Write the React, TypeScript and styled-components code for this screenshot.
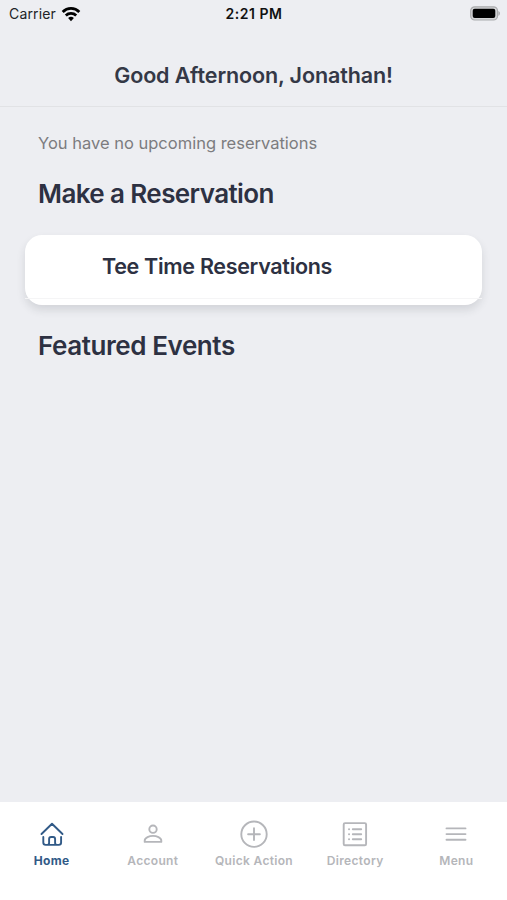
import React from "react";
import styled, { createGlobalStyle } from "styled-components";

const GlobalStyle = createGlobalStyle`
  * { box-sizing: border-box; }
  body { margin: 0; background: #edeef2; }
`;

const Screen = styled.div`
  display: flex;
  flex-direction: column;
  width: 507px;
  height: 900px;
  overflow: hidden;
  background: #edeef2;
  color: #2d3142;
  font-family: Inter, "Liberation Sans", sans-serif;
`;

const StatusBar = styled.div`
  display: grid;
  grid-template-columns: 1fr auto 1fr;
  align-items: center;
  height: 27px;
  padding: 0 7px 0 9px;
  color: #111;
  font-size: 14px;
  line-height: 27px;
`;

const Carrier = styled.div`
  display: flex;
  align-items: center;
  gap: 5px;
  color: #222327;
  letter-spacing: 0.15px;
`;

const Clock = styled.div`
  font-weight: 600;
  letter-spacing: 0.55px;
  margin-right: 1px;
`;

const Battery = styled.div`
  display: flex;
  justify-content: flex-end;
`;

const Header = styled.header`
  display: flex;
  align-items: center;
  justify-content: center;
  height: 80px;
  padding-top: 17px;
  border-bottom: 1px solid #e1e2e5;
`;

const Greeting = styled.h1`
  margin: 0;
  font-size: 21.5px;
  line-height: 28px;
  font-weight: 600;
  letter-spacing: -0.12px;
  color: #343846;
`;

const Main = styled.main`
  flex: 1;
  padding: 25px 25px 0;
`;

const Notice = styled.p`
  margin: 0 13px;
  font-size: 16.5px;
  line-height: 22px;
  color: #7c7c7f;
`;

const SectionTitle = styled.h2<{ $tracking: number }>`
  margin: 0 13px;
  font-size: 26px;
  line-height: 34px;
  font-weight: 600;
  letter-spacing: ${(p) => p.$tracking}px;
`;

const Section = styled.section`
  margin-top: 23px;

  & + & {
    margin-top: 24px;
  }
`;

const Card = styled.div`
  height: 70px;
  margin-top: 24px;
  border-radius: 17px;
  background: #fff;
  box-shadow: 0 5px 9px rgba(40, 45, 55, 0.13);
`;

const CardRow = styled.div`
  height: 64px;
  padding: 17px 77px 0;
  border-bottom: 1px solid #f5f5f6;
  font-size: 21.5px;
  line-height: 28px;
  font-weight: 600;
  letter-spacing: -0.31px;
  white-space: nowrap;
`;

const TabBar = styled.nav`
  display: grid;
  grid-template-columns: repeat(5, 1fr);
  height: 98px;
  padding: 18px 0 0 1px;
  background: #fff;
`;

const Tab = styled.div<{ $active?: boolean }>`
  display: flex;
  flex-direction: column;
  align-items: center;
  gap: 5px;
  color: ${(p) => (p.$active ? "#315a87" : "#b5b6ba")};
  font-size: 12px;
  line-height: 16px;
  font-weight: ${(p) => (p.$active ? 700 : 600)};
  letter-spacing: 0.32px;
  white-space: nowrap;
`;

const Icon = styled.svg`
  display: block;
  width: 28px;
  height: 28px;
  fill: none;
  stroke: currentColor;
  stroke-width: 1.9;
  stroke-linecap: round;
  stroke-linejoin: round;
`;

const WifiIcon = () => (
  <svg width="20" height="16" viewBox="0 0 20 16" fill="none" stroke="#000" strokeWidth="2.8">
    <path d="M1.7 5.9a11.6 11.6 0 0 1 16.6 0" />
    <path d="M4.8 9.5a7.5 7.5 0 0 1 10.4 0" />
    <path d="M10 15.2 7.1 12.1a4.1 4.1 0 0 1 5.8 0z" fill="#000" stroke="none" />
  </svg>
);

const BatteryIcon = () => (
  <svg width="30" height="15" viewBox="0 0 30 15">
    <rect x="0.7" y="0.8" width="26.8" height="13.2" rx="4" fill="#d4d5d7" stroke="#aaabad" strokeWidth="1.2" />
    <rect x="2.7" y="2.8" width="22.6" height="9.2" rx="2" fill="#000" />
    <path d="M28.4 5.1c2 .8 2 3.8 0 4.6z" fill="#a8a9ab" />
  </svg>
);

const HomeIcon = () => (
  <Icon viewBox="0 0 28 28">
    <path d="M3.5 14 14 3.8 24.5 14M5.3 17v5.6a2.3 2.3 0 0 0 2.3 2.3h13.2a2.3 2.3 0 0 0 2.3-2.3V17M8 24.9h1.1a2 2 0 0 0 2-2V19a2 2 0 0 1 2-2h2a2 2 0 0 1 2 2v3.9a2 2 0 0 0 2 2" />
  </Icon>
);

const AccountIcon = () => (
  <Icon viewBox="0 0 28 28">
    <circle cx="14" cy="9.2" r="3.7" />
    <path d="M5.7 21.9v-1.2c0-3.2 4.8-4.8 8.3-4.8s8.3 1.6 8.3 4.8v1.2z" />
  </Icon>
);

const QuickActionIcon = () => (
  <Icon viewBox="0 0 28 28">
    <circle cx="14" cy="14.2" r="12.7" />
    <path d="M14 8.3v11.8M8.1 14.2h11.8" />
  </Icon>
);

const DirectoryIcon = () => (
  <Icon viewBox="0 0 28 28">
    <rect x="2.7" y="3.1" width="22.4" height="22.2" rx="1.3" />
    <path d="M11.8 9.3h8.4M11.8 14.3h8.4M11.8 19.3h8.4M8 9.3h.1M8 14.3h.1M8 19.3h.1" />
  </Icon>
);

const MenuIcon = () => (
  <Icon viewBox="0 0 28 28">
    <path d="M4.5 8.4h19M4.5 14.1h19M4.5 19.7h19" />
  </Icon>
);

const tabs = [
  { label: "Home", Glyph: HomeIcon, active: true },
  { label: "Account", Glyph: AccountIcon },
  { label: "Quick Action", Glyph: QuickActionIcon },
  { label: "Directory", Glyph: DirectoryIcon },
  { label: "Menu", Glyph: MenuIcon },
];

export default function App() {
  return (
    <Screen>
      <GlobalStyle />
      <StatusBar>
        <Carrier>
          <span>Carrier</span>
          <WifiIcon />
        </Carrier>
        <Clock>2:21 PM</Clock>
        <Battery>
          <BatteryIcon />
        </Battery>
      </StatusBar>
      <Header>
        <Greeting>Good Afternoon, Jonathan!</Greeting>
      </Header>
      <Main>
        <Notice>You have no upcoming reservations</Notice>
        <Section>
          <SectionTitle $tracking={-0.6}>Make a Reservation</SectionTitle>
          <Card>
            <CardRow>Tee Time Reservations</CardRow>
          </Card>
        </Section>
        <Section>
          <SectionTitle $tracking={-0.42}>Featured Events</SectionTitle>
        </Section>
      </Main>
      <TabBar>
        {tabs.map(({ label, Glyph, active }) => (
          <Tab key={label} $active={active}>
            <Glyph />
            <span>{label}</span>
          </Tab>
        ))}
      </TabBar>
    </Screen>
  );
}
